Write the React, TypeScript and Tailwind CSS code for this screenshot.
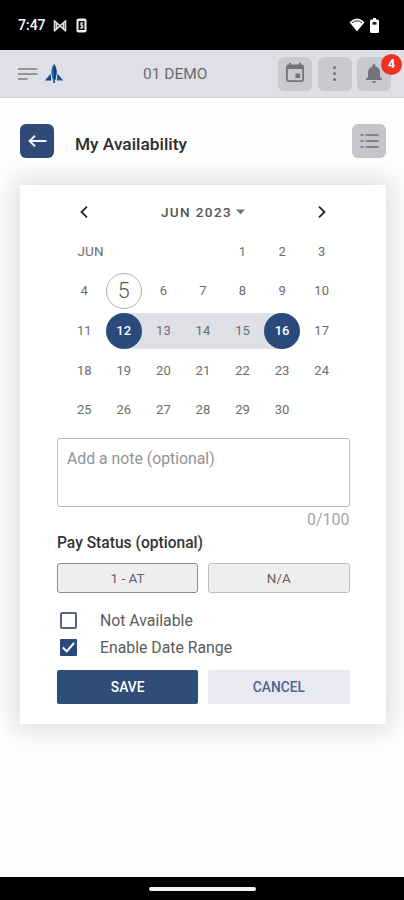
import React from "react";

type DayProps = { day: number };

const days = Array.from({ length: 30 }, (_, i) => i + 1);

function Day({ day }: DayProps) {
  if (day === 5) {
    return (
      <div className="flex items-center justify-center">
        <span className="flex h-9 w-9 shrink-0 items-center justify-center rounded-full border border-[#b0b0b0] text-[21.500px] font-light text-[#555]">5</span>
      </div>
    );
  }
  if (day === 12 || day === 16) {
    const half = day === 12 ? "from-transparent to-[#dfe0e6]" : "from-[#dfe0e6] to-transparent";
    return (
      <div className="flex items-center justify-center">
        <div className={`flex h-9 w-full items-center justify-center bg-linear-to-r from-50% to-50% ${half}`}>
          <span className="flex h-9 w-9 shrink-0 items-center justify-center rounded-full bg-[#294a7b] font-medium text-white">{day}</span>
        </div>
      </div>
    );
  }
  const inRange = day > 12 && day < 16;
  return (
    <div className="flex items-center justify-center">
      <span className={`flex h-9 w-full items-center justify-center ${inRange ? "bg-[#dfe0e6]" : ""}`}>{day}</span>
    </div>
  );
}

function StatusBar() {
  return (
    <div className="flex h-[50px] shrink-0 items-center bg-black pl-[18px] pr-[25px] text-white">
      <span className="w-7 whitespace-nowrap text-[14px] font-medium leading-4">7:47</span>
      <svg className="ml-[7px] mt-px h-3 w-[14px]" viewBox="0 0 14 12" fill="none" stroke="#ddd" strokeWidth="1.6">
        <path d="M1.500 11.500V1L7 5.800L12.500 1V11.500M1.500 11L7 5.800L12.500 11M3.500 3V9M10.500 3V9" />
      </svg>
      <svg className="ml-[9px] h-[15px] w-[11px]" viewBox="0 0 11 15">
        <rect x="0.5" y="0.5" width="10" height="14" rx="2" fill="#eee" />
        <path d="M2.500 3h6v9h-6z" fill="#111" />
        <path d="M7.200 5H4.800v2.300h2v2.500H4M5.800 4v7" stroke="#ddd" strokeWidth="1" fill="none" />
      </svg>
      <svg className="ml-auto h-[14px] w-4" viewBox="0 0 16 14">
        <path d="M.5 4.200Q8-3 15.500 4.200L8 13.500Z" fill="#fff" />
        <path d="M3 4.800Q8 .8 13 4.800" stroke="#222" strokeWidth="1" fill="none" />
      </svg>
      <svg className="ml-[5px] h-[15px] w-[9px]" viewBox="0 0 9 15">
        <path d="M3 0h3v1.500h1.500Q9 1.500 9 3v10.500Q9 15 7.500 15h-6Q0 15 0 13.500V3Q0 1.500 1.500 1.500H3Z" fill="#fff" />
        <path d="M2.500 4h4v2.700h-4z" fill="#222" />
      </svg>
    </div>
  );
}

function Header() {
  return (
    <header className="flex h-12 shrink-0 items-center border-b border-[#d5d5dc] bg-[#dfdfe7] pl-[18px] pr-[13px]">
      <svg className="mt-px h-3 w-5" viewBox="0 0 20 12" stroke="#96969b" strokeWidth="1.8">
        <path d="M0 1h19.500M0 6h19.500M0 11h9.500" />
      </svg>
      <svg className="ml-[7px] h-[19px] w-[18px]" viewBox="0 0 18 19">
        <path d="M9 0C10.800 2.500 11.800 5.500 11.600 9L10.400 15.500L9.700 16V19H8.300V16L7.600 15.500L6.400 9C6.200 5.500 7.200 2.500 9 0Z" fill="#1764a8" />
        <path d="M9 0C10.800 2.500 11.800 5.500 11.600 9L10.400 15.500L9.700 16V19H9Z" fill="#163b7a" />
        <path d="M5.600 10L6.300 16.500H0Z" fill="#163b7a" />
        <path d="M5.600 10L4.700 13.500L0 16.500Z" fill="#1764a8" />
        <path d="M12.400 10L11.700 16.500H18Z" fill="#1764a8" />
        <path d="M12.400 10L13.300 13.500L18 16.500Z" fill="#163b7a" />
      </svg>
      <span className="ml-[80px] w-[66px] whitespace-nowrap text-[15.500px] leading-5 text-[#6b6b70]">01 DEMO</span>
      <div className="ml-auto flex gap-[5.500px]">
        <div className="flex h-[34px] w-[34px] items-center justify-center rounded-md bg-[#c9c9d0]">
          <svg className="-mt-0.5 h-[21px] w-5" viewBox="0 0 20 21">
            <path d="M5 .8v3M15 .8v3" stroke="#737378" strokeWidth="2" />
            <rect x="1.900" y="3.500" width="16.200" height="15.600" rx="1.500" fill="none" stroke="#737378" strokeWidth="1.800" />
            <path d="M2 3h16v4H2z" fill="#737378" />
            <path d="M10.500 11.500h4.500V16h-4.500z" fill="#737378" />
          </svg>
        </div>
        <div className="flex h-[34px] w-[34px] flex-col items-center justify-center gap-[2.500px] rounded-md bg-[#c9c9d0]">
          <i className="h-[3.500px] w-[3.500px] rounded-full bg-[#717176]" />
          <i className="h-[3.500px] w-[3.500px] rounded-full bg-[#717176]" />
          <i className="h-[3.500px] w-[3.500px] rounded-full bg-[#717176]" />
        </div>
        <div className="relative flex h-[34px] w-[34px] items-center justify-center rounded-md bg-[#c9c9d0]">
          <svg className="h-[19px] w-4" viewBox="0 0 16 19" fill="#74747a">
            <path d="M6.500 2.500V1.500a1.500 1.500 0 0 1 3 0V2.500C12.500 3.200 14 5.500 14 8.500V13L16 15V16H0V15L2 13V8.500C2 5.500 3.500 3.200 6.500 2.500ZM6 17H10Q9.800 19 8 19T6 17Z" />
          </svg>
          <span className="absolute -right-[11px] -top-[3px] flex h-[21px] w-[21px] items-center justify-center rounded-full bg-[#ef3124] text-[12.500px] font-bold text-white">4</span>
        </div>
      </div>
    </header>
  );
}

function Calendar() {
  return (
    <section>
      <div className="mx-auto grid h-[46.700px] w-[277px] grid-cols-[40px_1fr_40px] items-center pt-[7px]">
        <svg className="ml-[15.500px] h-3 w-2" viewBox="0 0 8 12" fill="none" stroke="#252525" strokeWidth="1.800"><path d="M7 .7L1.500 6L7 11.300" /></svg>
        <div className="flex items-center justify-center gap-[4px]">
          <span className="whitespace-nowrap text-[13.500px] font-medium leading-5 tracking-[1.400px] text-[#555]">JUN 2023</span>
          <svg className="h-[6px] w-[9px]" viewBox="0 0 9 6" fill="#777"><path d="M0 .5h9L4.500 5.500z" /></svg>
        </div>
        <svg className="ml-[16px] h-3 w-2" viewBox="0 0 8 12" fill="none" stroke="#252525" strokeWidth="1.800"><path d="M1 .7L6.500 6L1 11.300" /></svg>
      </div>
      <div className="mx-auto grid h-[198px] w-[277px] grid-cols-7 grid-rows-5 text-[13px] tracking-[0.100px] text-[#6c6c6c]">
        <span className="col-span-4 self-center pl-[13px] text-[13.500px]">JUN</span>
        {days.map((day) => <Day key={day} day={day} />)}
      </div>
    </section>
  );
}

export default function App() {
  return (
    <div className="flex h-[900px] w-[404px] flex-col overflow-hidden bg-white font-[Roboto,sans-serif]">
      <StatusBar />
      <Header />
      <main className="flex flex-1 flex-col bg-[#fefefe]">
        <div className="mt-[26px] flex h-[34px] items-center pl-5 pr-[18px]">
          <div className="flex h-[34px] w-[34px] items-center justify-center rounded-md bg-[#304a78]">
            <svg className="h-3 w-[19px]" viewBox="0 0 19 12" fill="none" stroke="#edf5ff" strokeWidth="1.900"><path d="M18.500 6H1.500M7 .7L1.500 6L7 11.300" /></svg>
          </div>
          <h1 className="ml-[21px] mt-[5px] text-[17.300px] font-medium leading-6 text-[#2b2b2b]">My Availability</h1>
          <div className="ml-auto flex h-[34px] w-[34px] items-center justify-center rounded-md bg-[#c6c6ca]">
            <svg className="h-4 w-[19px]" viewBox="0 0 19 16" stroke="#82828a" strokeWidth="1.900"><path d="M.5 2h3M5.500 2h13M.5 8h3M5.500 8h13M.5 14h3M5.500 14h13" /></svg>
          </div>
        </div>
        <div className="ml-5 mt-[27px] h-[539px] w-[366px] bg-white shadow-[0_0_24px_7px_rgba(0,0,0,0.120)]">
          <Calendar />
          <form className="ml-[37px] mt-[8.300px] w-[292.500px]">
            <div className="h-[69px] rounded-[3px] border border-[#b8b8b8] px-[9px] pt-[10px] text-[15.800px] leading-5 text-[#929292]">Add a note (optional)</div>
            <div className="mt-[3px] text-right text-[16px] leading-5 text-[#a5a5a5]">0/100</div>
            <div className="mt-[3px] text-[15.600px] font-medium leading-5 text-[#333]">Pay Status (optional)</div>
            <div className="mt-[10px] grid h-[30px] grid-cols-2 gap-[10px] text-[13.500px] text-[#626262]">
              <div className="flex items-center justify-center rounded-[3px] border border-[#858c9c] bg-[#eeeeef]">1 - AT</div>
              <div className="flex items-center justify-center rounded-[3px] border border-[#bdbdbd] bg-[#eeeeee]">N/A</div>
            </div>
            <div className="mt-[14px] flex h-[27px] items-center pl-[3px] text-[15.800px] text-[#5c5c5c]">
              <i className="h-[17px] w-[17px] rounded-[2px] border-2 border-[#546787]" />
              <span className="ml-[23px]">Not Available</span>
            </div>
            <div className="flex h-[27px] items-center pl-[3px] text-[15.800px] text-[#5c5c5c]">
              <span className="flex h-[17px] w-[17px] items-center justify-center rounded-[1px] bg-[#294a7b]">
                <svg className="h-[11px] w-[13px]" viewBox="0 0 13 11" fill="none" stroke="white" strokeWidth="2"><path d="M.8 5.500L4.800 9.300L12 1" /></svg>
              </span>
              <span className="ml-[23px]">Enable Date Range</span>
            </div>
            <div className="mt-[9.500px] grid h-[34px] grid-cols-2 gap-[10px] text-[13.800px] font-medium">
              <div className="flex items-center justify-center rounded-[2px] bg-[#304d78] text-white">SAVE</div>
              <div className="flex items-center justify-center rounded-[2px] bg-[#e9e9f4] text-[#52648b]">CANCEL</div>
            </div>
          </form>
        </div>
      </main>
      <div className="flex h-[23px] shrink-0 items-center justify-center bg-black">
        <div className="h-1 w-[107px] rounded-full bg-[#f3f3f3]" />
      </div>
    </div>
  );
}
